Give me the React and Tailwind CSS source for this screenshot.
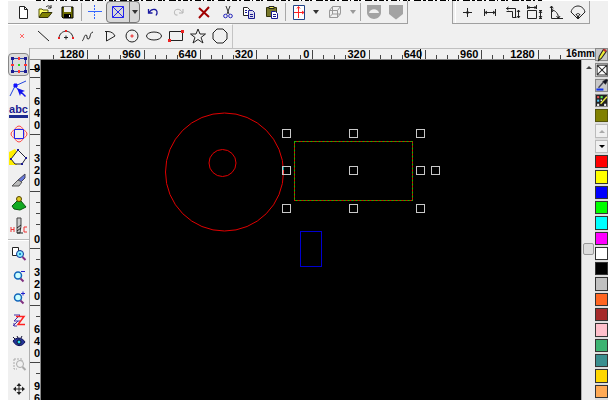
import React, { useState } from 'react';

const Svg = ({ children, className = 'h-5 w-5' }) => (
  <svg viewBox="0 0 20 20" className={`${className} shrink-0`} fill="none" stroke="#222" strokeWidth="1" aria-hidden="true">
    {children}
  </svg>
);

const icons = {
  newFile: (
    <Svg>
      <path d="M6.500 4.500h5l3 3v9h-8z" fill="#fff" />
      <path d="M11.500 4.500v3h3" />
    </Svg>
  ),
  open: (
    <Svg>
      <path d="M4 15V7h3l1 1h5v3" fill="#ffff66" stroke="#55550a" />
      <path d="M4 15.500l3-5h10l-4 5z" fill="#808000" stroke="#33330a" />
      <path d="M11 5c2-2 4-1 5 1m0-3v3h-3" />
    </Svg>
  ),
  save: (
    <Svg>
      <path d="M5 5h11v11H6l-1-1z" fill="#6b6b00" stroke="#000" />
      <path d="M7 5h7v5H7z" fill="#eee" stroke="none" />
      <path d="M7 12h7v4H7z" fill="#000" stroke="none" />
      <path d="M12 13h1v2h-1z" fill="#fff" stroke="none" />
    </Svg>
  ),
  cross: (
    <Svg>
      <path d="M3 9.500h14" stroke="#3366ff" />
      <path d="M9.500 3v14" stroke="#3366ff" strokeDasharray="2 1" />
    </Svg>
  ),
  boxX: (
    <Svg>
      <path d="M4.500 4.500h11v11h-11zl11 11m0-11l-11 11" stroke="#2222ee" />
    </Svg>
  ),
  undo: (
    <Svg>
      <path d="M5.500 7v4h4M6 10.500c2-3 4-3.500 6-3s3 3 1 6" stroke="#1a1aa0" strokeWidth="1.300" />
    </Svg>
  ),
  redo: (
    <Svg>
      <path d="M15 7v4h-4M14.500 10.500c-2-3-4-3.500-6-3s-3 3-1 5.500h2" stroke="#b0b0b0" />
    </Svg>
  ),
  del: (
    <Svg>
      <path d="M5 6l10 9M15 5L5 16" stroke="#a00000" strokeWidth="2" />
    </Svg>
  ),
  cut: (
    <Svg>
      <path d="M8 4l3 8M12 4l-3 8" stroke="#333" />
      <circle cx="7.500" cy="14" r="1.800" stroke="#2222bb" />
      <circle cx="12.500" cy="14" r="1.800" stroke="#2222bb" />
    </Svg>
  ),
  copy: (
    <Svg>
      <path d="M4.500 5.500h4l2 2v6h-6z" fill="#fff" />
      <path d="M9.500 8.500h4l2 2v6h-6z" fill="#dde" stroke="#1a1a90" />
      <path d="M6 8.500h2m-2 2h2m3 2h3m-3 2h3" stroke="#1a1a90" />
    </Svg>
  ),
  paste: (
    <Svg>
      <path d="M4.500 5.500h10v9h-10z" fill="#77772a" stroke="#33330a" />
      <path d="M7 4.500h5v2H7z" fill="#ee5" />
      <path d="M9.500 9.500h4l2 2v5h-6z" fill="#fff" stroke="#1a1a90" />
      <path d="M11 12.500h3m-3 2h3" stroke="#1a1a90" />
    </Svg>
  ),
  center: (
    <Svg>
      <path d="M4.500 3.500h11v14h-11z" fill="#fff" stroke="#224488" />
      <path d="M9.500 5v11M5 10.500h10M8 6.500l1.500-2 1.500 2M13 9l2 1.500-2 1.500" stroke="#f22" />
    </Svg>
  ),
  cube: (
    <Svg>
      <path d="M4.500 8.500h8v7h-8zl3-4h8l-3 4m3-4v7l-3 4M7.500 5v7h8m-8 0l-3 3" stroke="#999" />
    </Svg>
  ),
  shieldCut: (
    <Svg>
      <path d="M3 3h14v8c0 3-4 6-7 6s-7-3-7-6z" fill="#a3a3a3" stroke="none" />
      <path d="M5 11c1-5 9-5 10 0z" fill="#f0f0f0" stroke="none" />
    </Svg>
  ),
  shield: (
    <Svg>
      <path d="M3 3h14v9l-5 4-2 1.500-2-1.500-5-4z" fill="#a3a3a3" stroke="none" />
    </Svg>
  ),
  plus: (
    <Svg>
      <path d="M5 10.500h9M9.500 6v9" />
      <circle cx="9.500" cy="10.500" r="1" fill="#222" />
    </Svg>
  ),
  hDim: (
    <Svg>
      <path d="M4.500 7v7M15.500 7v7M5 10.500h10M7 9l-2 1.500L7 12M13 9l2 1.500-2 1.500" />
    </Svg>
  ),
  stepDim: (
    <Svg>
      <path d="M4.500 6.500h9v9M4.500 9.500h6v6h4M6.500 5l-2 1.500 2 1.500M16.500 8v8M15 10l1.500-2 1.500 2M15 14l1.500 2 1.500-2" />
    </Svg>
  ),
  boxDim: (
    <Svg>
      <path d="M3.500 8.500h9v8h-9zM3 5.500h10M3.500 3v4M12.500 3v4M16.500 8v9M15 8.500h3M15 16.500h3M15 11l1.500-2 1.500 2M15 14l1.500 2 1.500-2M5.500 4L4 5.500 5.500 7m5-3L12 5.500 10.500 7" />
    </Svg>
  ),
  angle: (
    <Svg>
      <path d="M5.500 4v12.500H17M5.500 8c4 0 7 4 7 8M4 6l1.500-2L7 6M7 6.500L5.500 8 7 10m3.500 4l2 2.500 1.500-2.500" />
    </Svg>
  ),
  fan: (
    <Svg>
      <path d="M3 10c2-8 12-8 14 0l-7 7zM8 12l2 3 2-3M8 13c1-2 3-2 4 0" />
      <circle cx="10" cy="15.500" r="1" fill="#222" />
    </Svg>
  ),
  point: (
    <Svg>
      <path d="M8 8l4 4m0-4l-4 4" stroke="#f66" />
    </Svg>
  ),
  line: (
    <Svg>
      <path d="M4 5l11 10" />
    </Svg>
  ),
  arc: (
    <Svg>
      <path d="M3 12c1-9 13-9 14 0M8 11.500h4M10 9.500v4" />
      <path d="M9 4h2v2H9zM2 11h2v2H2zM16 11h2v2h-2z" fill="#e22" stroke="none" />
    </Svg>
  ),
  wave: (
    <Svg>
      <path d="M4 15c2-1 2-6 4-6s0 4 2 4c3 0 1-6 5-7" />
    </Svg>
  ),
  poly: (
    <Svg>
      <path d="M5 5.500h3c3 0 6 2 7 4.500l-8.500 5V6" />
    </Svg>
  ),
  circle: (
    <Svg>
      <circle cx="10" cy="10" r="6" />
      <path d="M9 9h2v2H9z" fill="#e22" stroke="#e66" />
    </Svg>
  ),
  ellipse: (
    <Svg>
      <ellipse cx="10" cy="10" rx="7.500" ry="4" />
    </Svg>
  ),
  rect: (
    <Svg>
      <path d="M3.500 5.500h13v9h-13z" />
      <path d="M2 13h3v3H2zM15 4h3v3h-3z" fill="#e22" stroke="none" />
    </Svg>
  ),
  star: (
    <Svg>
      <path d="M10 3l2 5h5.500l-4.500 3.500 2 5.500-5-3.500L5 17l2-5.500L2.500 8H8z" />
    </Svg>
  ),
  octagon: (
    <Svg>
      <path d="M7 3h6l4 4v6l-4 4H7l-4-4V7z" />
    </Svg>
  ),
  select: (
    <Svg>
      <path d="M3.500 3.500h13v13h-13z" stroke="#3344aa" />
      <path d="M2 2h3v3H2zM15 2h3v3h-3zM2 15h3v3H2zM15 15h3v3h-3z" fill="#1a1a90" stroke="none" />
      <path d="M9 2h2v3H9zM9 15h2v3H9zM2 9h3v2H2zM15 9h3v2h-3z" fill="#f33" stroke="none" />
      <path d="M9 9h2v2H9z" fill="#2d2" stroke="none" />
    </Svg>
  ),
  node: (
    <Svg>
      <path d="M17 3L6 8 1 18M6 8l7 8" stroke="#2244dd" />
      <path d="M5 6h3v3H5z" fill="#11f" stroke="#11f" />
      <path d="M8 10l8 3-3 1 4 4-1 1-4-4-1 3z" fill="#11e" stroke="none" />
    </Svg>
  ),
  shapeNode: (
    <Svg>
      <ellipse cx="10" cy="10" rx="5" ry="8" stroke="#f44" />
      <ellipse cx="10" cy="10" rx="8" ry="5" stroke="#f44" />
      <path d="M5.500 5.500h9v9h-9z" fill="#f0f0f0" stroke="#2222ee" />
    </Svg>
  ),
  outline: (
    <Svg>
      <path d="M0 5l6-3 3 4-1 12H0z" fill="#ffee00" stroke="none" />
      <path d="M2 12l7-9 8 8-4 6H6z" fill="#f4f4f4" stroke="#223" />
      <path d="M8 2h2v2H8zM16 10h2v2h-2zM12 16h2v2h-2zM1 11h2v2H1z" fill="#1a1a90" stroke="none" />
    </Svg>
  ),
  knife: (
    <Svg>
      <path d="M16 4L9 10l2 3 5-5z" fill="#6677dd" stroke="#445" />
      <path d="M9 10l-6 6h7l3-4z" fill="#bbb" stroke="#555" />
    </Svg>
  ),
  stamp: (
    <Svg>
      <path d="M8 8L3 13l2 3 6 1 6-3-5-6z" fill="#11aa22" stroke="#0a5510" />
      <circle cx="10" cy="6" r="2.500" fill="#ddcc22" stroke="#554400" />
    </Svg>
  ),
  drill: (
    <Svg>
      <path d="M8 2h4v8l-1 7H8z" fill="#ccc" stroke="#444" />
      <path d="M8 12l4-3M8 15l4-3M8 17h6" stroke="#222" />
      <path d="M2 11v5M2 13.500h3M5 11v5M18 11h-3v5h3" stroke="#e33" />
    </Svg>
  ),
  zoomBox: (
    <Svg>
      <path d="M3.500 3.500h6v8h-6z" fill="#fff" />
      <circle cx="11" cy="10" r="3.500" fill="#8ef" stroke="#113399" />
      <path d="M13.500 13l3 3" stroke="#803080" strokeWidth="2" />
      <path d="M10 9h2v2h-2z" fill="#28c" stroke="none" />
    </Svg>
  ),
  zoomOut: (
    <Svg>
      <circle cx="9" cy="9.500" r="3.500" fill="#cff" stroke="#1166bb" strokeWidth="1.500" />
      <path d="M11.500 12.500l3 3" stroke="#803080" strokeWidth="2" />
      <path d="M12 5.500h4" stroke="#22c" />
    </Svg>
  ),
  zoomIn: (
    <Svg>
      <circle cx="9" cy="9.500" r="3.500" fill="#cff" stroke="#1166bb" strokeWidth="1.500" />
      <path d="M11.500 12.500l3 3" stroke="#803080" strokeWidth="2" />
      <path d="M12 5.500h4M14 3.500v4" stroke="#22c" />
    </Svg>
  ),
  zoomAll: (
    <Svg>
      <path d="M5 5h6l-6 6h6M4 16l5-5M5 13v3h3" stroke="#4433aa" />
      <path d="M7 6.500h8l-6 8h7" stroke="#f22" strokeWidth="1.500" />
    </Svg>
  ),
  eye: (
    <Svg>
      <path d="M4 9c3-4 9-4 12 1-3 5-9 5-12-1z" fill="#223399" stroke="#111155" />
      <circle cx="10" cy="10" r="2" fill="#2bdff5" stroke="#112" />
      <path d="M4 5l2 2M8 4l1 2M13 4l-1 2" stroke="#113" />
    </Svg>
  ),
  zoomGray: (
    <Svg>
      <path d="M5 5h8v2M5 5v10h3" stroke="#aaa" strokeDasharray="2 1" />
      <circle cx="11" cy="10" r="3.500" stroke="#aaa" />
      <path d="M13.500 13l3 3" stroke="#aaa" strokeWidth="2" />
    </Svg>
  ),
  move: (
    <Svg>
      <path d="M5 10h10M10 5v10" stroke="#222" />
      <path d="M10 4l2.500 3h-5zM10 16l2.500-3h-5zM4 10l3-2.500v5zM16 10l-3-2.500v5z" fill="#222" stroke="none" />
    </Svg>
  ),
};

const lineTools = ['point', 'line', 'arc', 'wave', 'poly', 'circle', 'ellipse', 'rect', 'star', 'octagon'];
const dimTools = ['plus', 'hDim', 'stepDim', 'boxDim', 'angle', 'fan'];
const editTools = ['select', 'node', 'text', 'shapeNode', 'outline', 'knife', 'stamp', 'drill'];
const viewTools = ['zoomBox', 'zoomOut', 'zoomIn', 'zoomAll', 'eye', 'zoomGray'];

const hRuler = [
  { label: '1280', ticks: 2 },
  { label: '960', ticks: 3 },
  { label: '640', ticks: 3 },
  { label: '320', ticks: 3 },
  { label: '0', ticks: 4 },
  { label: '320', ticks: 3 },
  { label: '640', ticks: 3 },
  { label: '960', ticks: 3 },
  { label: '1280', ticks: 2 },
];

const vRuler = [
  { label: '640', ticks: 1 },
  { label: '320', ticks: 1 },
  { label: '0', ticks: 3 },
  { label: '320', ticks: 1 },
  { label: '640', ticks: 1 },
  { label: '960', ticks: 1 },
];

const swatches = [
  '#ff0000', '#ffff00', '#0000ff', '#00ff00', '#00ffff', '#ff00ff', '#ffffff', '#000000',
  '#c0c0c0', '#ff6622', '#a52a2a', '#ffc0cb', '#3cb371', '#3a8f8f', '#ffd700', '#ffaa55',
];

const handles = [
  [245, 73], [312, 73], [379, 73],
  [245, 110], [312, 110], [379, 110], [394, 110],
  [245, 148], [312, 148], [379, 148],
];

const Tool = ({ name, width = 'w-[22px]', className = '', onClick }) => (
  <button type="button" aria-label={name} onClick={onClick} className={`flex shrink-0 items-center justify-center ${width} ${className}`}>
    {icons[name]}
  </button>
);

const Arrow = ({ width, color = 'border-t-[#333]', label, className = '' }) => (
  <button type="button" aria-label={label} className={`flex shrink-0 items-center justify-center ${width} ${className}`}>
    <span className={`border-x-3 border-t-4 border-x-transparent ${color}`} />
  </button>
);

const Sep = ({ width }) => (
  <div className={`flex shrink-0 justify-center py-0.5 ${width}`}>
    <div className="w-px bg-[#a8a8a8]" />
  </div>
);

function TopBars() {
  return (
    <header>
      <svg className="block h-px w-full bg-white" aria-hidden="true">
        <path d="M28 0.500H534" stroke="#000" strokeDasharray="5 2 2 3 6 2 1 3 4 1 2 4 7 2 3 2" />
      </svg>
      <div className="flex h-[23px]">
        <div className="flex border-r border-b border-[#a0a0a0] pl-1">
          <Tool name="newFile" />
          <Tool name="open" />
          <Tool name="save" />
          <Sep width="w-1.5" />
          <Tool name="cross" />
          <div className="flex rounded-sm border border-[#777] bg-[#d8d8d8]">
            <Tool name="boxX" />
            <Arrow width="w-2.5" label="Snap options" className="border-l border-[#777]" />
          </div>
          <Tool name="undo" width="w-[26px]" />
          <Tool name="redo" width="w-6" />
          <Tool name="del" width="w-7" />
          <Tool name="cut" width="w-5" />
          <Tool name="copy" />
          <Tool name="paste" width="w-6" />
          <Sep width="w-[3px]" />
          <Tool name="center" width="w-6" />
          <Arrow width="w-2.5" label="Center options" />
          <Tool name="cube" width="w-7" />
          <Arrow width="w-2" label="View options" color="border-t-[#999]" />
          <Sep width="w-1.5" />
          <Tool name="shieldCut" />
          <Tool name="shield" />
        </div>
        <div className="ml-11 flex border-x border-b border-[#a0a0a0]">
          <div className="mr-px ml-0.5 w-px bg-white" />
          {dimTools.map(name => (
            <Tool key={name} name={name} />
          ))}
        </div>
      </div>
      <div className="flex h-6 items-stretch">
        <div className="flex border-t border-r border-t-white border-r-[#c4c4c4] pr-px pb-0.5 pl-[3px]">
          {lineTools.map(name => (
            <Tool key={name} name={name} />
          ))}
        </div>
      </div>
    </header>
  );
}

function SideTools({ active, setActive }) {
  return (
    <nav className="flex w-[22px] shrink-0 flex-col border-r border-[#b0b0b0]">
      <div className="mt-0.5 mb-[3px] h-px bg-[#c8c8c8]" />
      {editTools.map(name =>
        name === 'text' ? (
          <button
            key={name}
            type="button"
            onClick={() => setActive(name)}
            className="flex h-[23px] shrink-0 items-center justify-center text-[11px] leading-3 font-bold text-[#1a1a90]"
          >
            <span className="border-b-3 border-[#1a2a90]">abc</span>
          </button>
        ) : (
          <Tool
            key={name}
            name={name}
            width="w-full"
            onClick={() => setActive(name)}
            className={`h-[23px] ${active === name ? 'rounded-sm border border-[#888] bg-[#dcdcdc]' : ''}`}
          />
        )
      )}
      <div className="my-0.5 h-[3px] border-y border-t-[#b8b8b8] border-b-white" />
      {viewTools.map(name => (
        <Tool key={name} name={name} width="w-full" className="h-[22px]" />
      ))}
      <div className="my-px h-px bg-[#b0b0b0]" />
      <Tool name="move" width="w-full" className="h-6" />
    </nav>
  );
}

function Ticks({ count }) {
  return Array.from({ length: count }, (_, i) => <div key={i} className="h-1 w-[11px] shrink-0 border-r border-[#444]" />);
}

function HorizontalRuler() {
  return (
    <div className="relative flex h-3 shrink-0 border-t border-b border-t-[#c0c0c0] border-b-[#888] pl-0.5">
      {hRuler.map((seg, i) => (
        <div key={i} className="flex min-w-0 flex-1 items-end">
          {i === 0 ? (
            <div className="flex pl-[11px]">
              <Ticks count={1} />
            </div>
          ) : (
            <Ticks count={seg.ticks} />
          )}
          <span className="ml-auto pr-[3px] text-[11px] leading-[10px] font-bold">{seg.label}</span>
          <span className="h-[9px] w-px bg-[#444]" />
        </div>
      ))}
      <div className="flex min-w-0 flex-1 items-end">
        <Ticks count={2} />
        <span className="ml-auto text-[10px] leading-[10px] font-bold">16mm</span>
      </div>
      <div className="absolute top-0 left-[69%] h-2.5 w-px bg-black" />
    </div>
  );
}

function VerticalRuler() {
  return (
    <div className="relative flex w-[11px] shrink-0 flex-col overflow-hidden border-r border-[#888]">
      <div className="flex h-[18px] shrink-0 flex-col items-end border-b border-[#444] text-[11px] leading-3 font-bold">
        <span className="pt-0.5">9</span>
      </div>
      {vRuler.map((seg, i) => (
        <div key={i} className="flex h-[57px] shrink-0 flex-col items-end border-b border-[#444]">
          {Array.from({ length: seg.ticks }, (_, t) => (
            <div key={t} className="h-[11px] w-1 border-b border-[#444]" />
          ))}
          <div className="mt-auto flex flex-col pb-[3px] text-[11px] leading-3 font-bold">
            {seg.label.split('').map((digit, d) => (
              <span key={d}>{digit}</span>
            ))}
          </div>
        </div>
      ))}
      <div className="absolute top-[9px] left-0 h-px w-full bg-black" />
    </div>
  );
}

function Drawing() {
  return (
    <svg className="h-full min-w-0 flex-1 bg-black" fill="none" role="img" aria-label="Drawing canvas">
      <circle cx="183.500" cy="112" r="59" stroke="#e00000" />
      <circle cx="181.500" cy="103" r="13.500" stroke="#e00000" />
      <rect x="253.500" y="81.500" width="118" height="59" stroke="#e00000" />
      <rect x="253.500" y="81.500" width="118" height="59" stroke="#00c800" strokeDasharray="2 2" />
      <rect x="259.500" y="171.500" width="21" height="35" stroke="#0000d0" />
      {handles.map(([x, y]) => (
        <rect key={`${x}-${y}`} x={x - 3.5} y={y - 3.5} width="8" height="8" stroke="#c8c8c8" />
      ))}
      <path d="M242.500 107v3" stroke="#009090" />
      <path d="M242.500 110v4" stroke="#ff4444" />
    </svg>
  );
}

const paletteTools = [
  {
    name: 'Pen',
    bg: 'bg-[#c8c8c8]',
    icon: (
      <Svg className="h-3.5 w-3.5">
        <path d="M5 18l1-6L12 2l4 3-7 10z" fill="#ee3" stroke="#222" strokeWidth="1.500" />
        <path d="M11 3l4 3 2-3-4-2z" fill="#b33" stroke="none" />
      </Svg>
    ),
  },
  {
    name: 'No color',
    bg: 'bg-white',
    icon: (
      <Svg className="h-3.5 w-3.5">
        <path d="M3 3h14v14H3zl14 14m0-14L3 17" stroke="#333" strokeWidth="1.500" />
      </Svg>
    ),
  },
  {
    name: 'Pick color',
    bg: 'bg-[#c8c8c8]',
    icon: (
      <Svg className="h-3.5 w-3.5">
        <path d="M5 14l7-8" stroke="#445" strokeWidth="2" />
        <path d="M11 5l4 4 3-6-2-1z" fill="#112" />
        <path d="M2 15h10v3H2z" fill="#1133ee" stroke="none" />
      </Svg>
    ),
  },
  {
    name: 'Edit palette',
    bg: 'bg-[#222]',
    icon: (
      <Svg className="h-3.5 w-3.5">
        <path d="M3 3h3v3H3z" fill="#e55" stroke="none" />
        <path d="M8 3h3v3H8z" fill="#5e5" stroke="none" />
        <path d="M3 8h3v3H3z" fill="#5cf" stroke="none" />
        <path d="M8 8h2v2H8z" fill="#eee" stroke="none" />
        <path d="M3 14h3v3H3zM13 14h3v3h-3z" fill="#eee" stroke="none" />
        <path d="M8 14l9-10" stroke="#ee4" strokeWidth="2" />
      </Svg>
    ),
  },
];

function Palette() {
  const [color, setColor] = useState('#808000');
  return (
    <aside className="flex w-[13px] shrink-0 flex-col bg-[#ddd]">
      {paletteTools.map(tool => (
        <button key={tool.name} type="button" aria-label={tool.name} className={`mb-0.5 flex min-h-0 flex-1 items-center justify-center border border-[#888] ${tool.bg}`}>
          {tool.icon}
        </button>
      ))}
      <div className="mb-0.5 min-h-0 flex-1 border border-[#55550a]" style={{ backgroundColor: color }} />
      <button type="button" aria-label="Previous colors" className="mb-0.5 flex min-h-0 flex-1 items-center justify-center border border-[#bbb] bg-[#f0f0f0]">
        <span className="border-x-3 border-b-3 border-x-transparent border-b-[#aaa]" />
      </button>
      <button type="button" aria-label="Next colors" className="mb-0.5 flex min-h-0 flex-1 items-center justify-center border border-[#bbb] bg-[#f0f0f0]">
        <span className="border-x-3 border-t-3 border-x-transparent border-t-black" />
      </button>
      {swatches.map(value => (
        <button
          key={value}
          type="button"
          aria-label={value}
          onClick={() => setColor(value)}
          className="mb-0.5 min-h-0 flex-1 border border-[#333]"
          style={{ backgroundColor: value }}
        />
      ))}
    </aside>
  );
}

export default function App() {
  const [active, setActive] = useState('select');
  return (
    <div className="flex h-screen flex-col overflow-hidden bg-white pr-[3px] pl-2 font-['Liberation_Sans',Arial,sans-serif] text-black">
      <div className="flex min-h-0 flex-1 flex-col bg-[#f0f0f0]">
        <TopBars />
        <div className="flex min-h-0 flex-1">
          <SideTools active={active} setActive={setActive} />
          <main className="flex min-w-0 flex-1 flex-col">
            <HorizontalRuler />
            <div className="flex min-h-0 flex-1">
              <VerticalRuler />
              <Drawing />
              <div className="flex w-3.5 shrink-0 flex-col items-center border-l border-[#aaa] bg-[#ececec] pt-1.5">
                <span className="border-x-3 border-b-3 border-x-transparent border-b-[#444]" />
                <div className="mt-[174px] h-3 w-[11px] rounded-xs border border-[#999] bg-[#ddd]" />
              </div>
            </div>
          </main>
          <Palette />
        </div>
      </div>
    </div>
  );
}
